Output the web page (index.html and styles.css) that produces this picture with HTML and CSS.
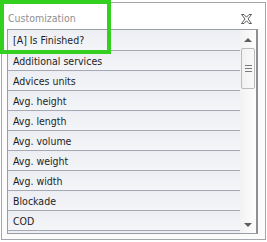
FILE: index.html
```html
<!DOCTYPE html>
<html>
<head>
<meta charset="utf-8">
<link rel="stylesheet" href="styles.css">
</head>
<body>
<div class="window">
  <div class="titlebar">
    <span class="title">Customization</span>
    <svg class="close" width="11" height="10" viewBox="0 0 11 10">
      <path d="M0.5 0.5 H3 L5.5 3.2 L8 0.5 H10.5 L7 5 L10.5 9.5 H8 L5.5 6.8 L3 9.5 H0.5 L4 5 Z" fill="#fff" stroke="#5a5a5a" stroke-width="1"/>
    </svg>
  </div>
  <div class="list">
    <div class="rows">
      <div class="row first">[A] Is Finished?</div>
      <div class="row">Additional services</div>
      <div class="row">Advices units</div>
      <div class="row">Avg. height</div>
      <div class="row">Avg. length</div>
      <div class="row">Avg. volume</div>
      <div class="row">Avg. weight</div>
      <div class="row">Avg. width</div>
      <div class="row">Blockade</div>
      <div class="row">COD</div>
      <div class="row">&nbsp;</div>
    </div>
    <div class="scrollbar">
      <div class="arrow up"></div>
      <div class="thumb"><span></span><span></span><span></span></div>
      <div class="track"></div>
      <div class="arrow down"></div>
    </div>
  </div>
</div>
<div class="highlight"></div>
</body>
</html>
```
FILE: styles.css
```css
html, body {
  margin: 0;
  padding: 0;
  background: #ffffff;
}
body {
  width: 267px;
  height: 242px;
  position: relative;
  overflow: hidden;
  font-family: "DejaVu Sans Condensed", "DejaVu Sans", sans-serif;
  font-size: 10.5px;
}
.window {
  margin: 2px 0 0 1px;
  width: 263px;
  height: 236px;
  border: 1px solid #a3a7ac;
  background: #fbfbfb;
  display: flex;
  flex-direction: column;
}
.titlebar {
  height: 26px;
  display: flex;
  align-items: center;
  justify-content: space-between;
  padding: 0 13px 0 6px;
  background: #ffffff;
}
.title {
  color: #8f8f8f;
  padding-top: 4px;
}
.close {
  display: block;
  margin-top: 5px;
}
.list {
  margin-left: 5px;
  width: 248px;
  height: 203px;
  border: 1px solid #9a9ea4;
  border-right: 2px solid #8d9196;
  display: flex;
  overflow: hidden;
}
.rows {
  flex: 1;
  overflow: hidden;
}
.row {
  height: 19px;
  line-height: 20px;
  padding-left: 5px;
  border-bottom: 1px solid #a4a9b4;
  color: #1e1e1e;
  background: linear-gradient(#eceef3, #f4f5f8);
  white-space: nowrap;
}
.row.first {
  height: 20px;
  line-height: 21px;
}
.scrollbar {
  width: 16px;
  display: flex;
  flex-direction: column;
  align-items: center;
  background: linear-gradient(90deg, #f2f2f2, #fdfdfd);
}
.arrow {
  width: 0;
  height: 0;
  border-left: 4px solid transparent;
  border-right: 4px solid transparent;
}
.arrow.up {
  margin-top: 8px;
  border-bottom: 4px solid #5e5e5e;
}
.arrow.down {
  margin-bottom: 6px;
  border-top: 4px solid #5e5e5e;
}
.thumb {
  margin-top: 6px;
  width: 14px;
  height: 41px;
  box-sizing: border-box;
  border: 1px solid #b9bbbe;
  border-radius: 2px;
  background: linear-gradient(90deg, #f1f1f1, #fafafa);
  display: flex;
  flex-direction: column;
  justify-content: center;
  align-items: center;
  gap: 2px;
}
.thumb span {
  display: block;
  width: 7px;
  height: 1px;
  background: #7a7a7a;
}
.track {
  flex: 1;
}
.highlight {
  position: absolute;
  left: 0;
  top: 0;
  width: 103px;
  height: 46px;
  border: 4px solid #33d01f;
}
```
